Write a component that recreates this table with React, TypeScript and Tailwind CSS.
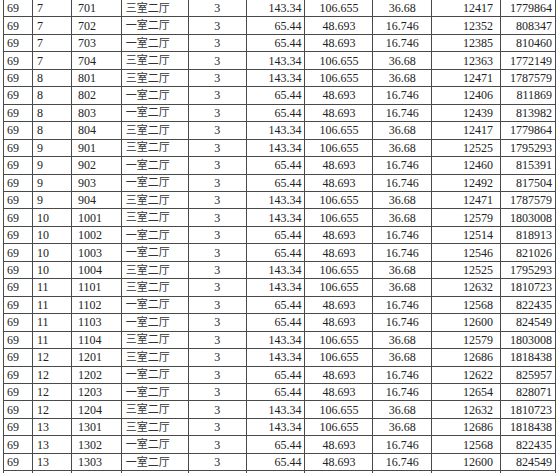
import React from "react";

type Row = string[];

const big = ["三室二厅", "3", "143.34", "106.655", "36.68"];
const small = ["一室二厅", "3", "65.44", "48.693", "16.746"];

const raw: [string, string, boolean, string, string][] = [
  ["7", "701", true, "12417", "1779864"],
  ["7", "702", false, "12352", "808347"],
  ["7", "703", false, "12385", "810460"],
  ["7", "704", true, "12363", "1772149"],
  ["8", "801", true, "12471", "1787579"],
  ["8", "802", false, "12406", "811869"],
  ["8", "803", false, "12439", "813982"],
  ["8", "804", true, "12417", "1779864"],
  ["9", "901", true, "12525", "1795293"],
  ["9", "902", false, "12460", "815391"],
  ["9", "903", false, "12492", "817504"],
  ["9", "904", true, "12471", "1787579"],
  ["10", "1001", true, "12579", "1803008"],
  ["10", "1002", false, "12514", "818913"],
  ["10", "1003", false, "12546", "821026"],
  ["10", "1004", true, "12525", "1795293"],
  ["11", "1101", true, "12632", "1810723"],
  ["11", "1102", false, "12568", "822435"],
  ["11", "1103", false, "12600", "824549"],
  ["11", "1104", true, "12579", "1803008"],
  ["12", "1201", true, "12686", "1818438"],
  ["12", "1202", false, "12622", "825957"],
  ["12", "1203", false, "12654", "828071"],
  ["12", "1204", true, "12632", "1810723"],
  ["13", "1301", true, "12686", "1818438"],
  ["13", "1302", false, "12568", "822435"],
  ["13", "1303", false, "12600", "824549"],
];

const rows: Row[] = raw.map(([floor, room, isBig, price, total]) => {
  const s = isBig ? big : small;
  return ["69", floor, room, s[0], s[1], s[2], s[3], s[4], price, total];
});
// row running off the bottom edge: only its borders show
rows.push(["", "", "", "", "", "", "", "", "", ""]);

// widths include the right border
const cols = [
  "w-[29px] justify-start pl-[3px]",
  "w-[39px] justify-start pl-[4px]",
  "w-[50px] justify-start pl-[6px]",
  "w-[67px] justify-start pl-[4px]",
  "w-[58px] justify-center",
  "w-[59px] justify-end pr-[3px]",
  "w-[68px] justify-center",
  "w-[59px] justify-center",
  "w-[69px] justify-end pr-[7px]",
  "w-[55px] justify-end pr-[3px]",
];

export default function App() {
  return (
    <div className="w-[560px] h-[473px] overflow-hidden bg-white">
      <div
        className="ml-[3px] w-[553px] border-l border-[#4a4a4a] text-[12px] text-[#222]"
        style={{ fontFamily: '"Liberation Serif", "Noto Sans CJK SC", serif' }}
      >
        {rows.map((r, i) => (
          <div key={i} className="flex h-[17.46px] border-b border-[#4a4a4a]">
            {r.map((c, j) => (
              <div
                key={j}
                className={`${cols[j]} flex items-center border-r border-[#4a4a4a] leading-none whitespace-nowrap ${
                  j === 3 ? "text-[11px] text-[#333]" : ""
                }`}
              >
                {c}
              </div>
            ))}
          </div>
        ))}
      </div>
    </div>
  );
}
